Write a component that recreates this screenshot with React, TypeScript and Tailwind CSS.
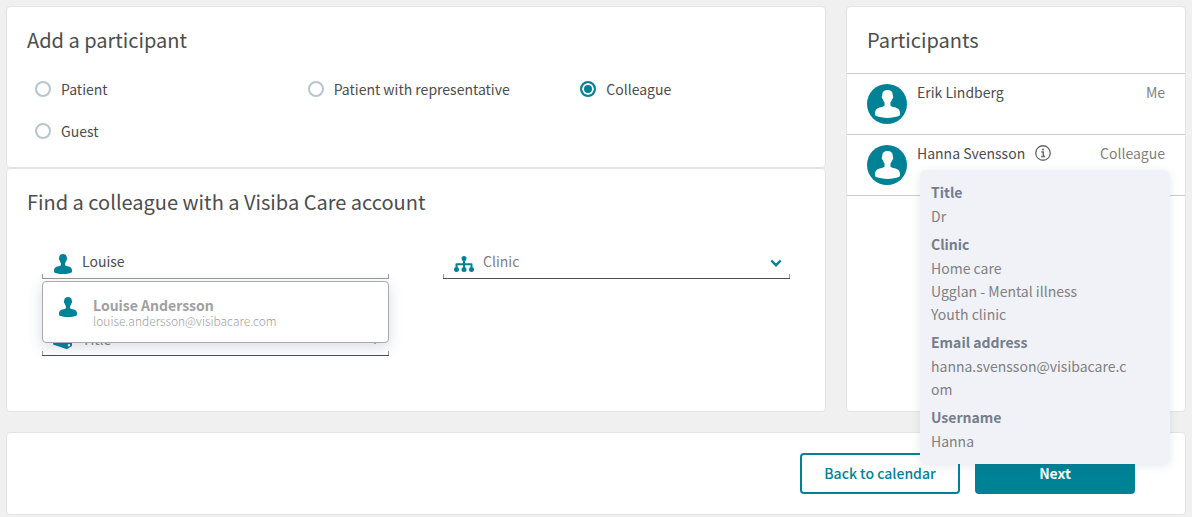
import { useState, type ReactNode } from 'react'

const participantTypes = ['Patient', 'Patient with representative', 'Colleague', 'Guest']

const details = [
  { label: 'Title', values: ['Dr'] },
  { label: 'Clinic', values: ['Home care', 'Ugglan - Mental illness', 'Youth clinic'] },
  { label: 'Email address', values: ['hanna.svensson@visibacare.com'] },
  { label: 'Username', values: ['Hanna'] },
]

function PersonIcon({ className }: { className: string }) {
  return (
    <svg viewBox="0 0 18 20" fill="currentColor" className={className} aria-hidden="true">
      <path d="M9 0C6.600 0 5.200 1.300 5.200 3.600c0 .5-.4.7-.3 1.500.1.8.4 1.100.8 1.300.2 1.200.6 1.900 1.200 2.500v1.900c0 .6-.5.9-1.300 1.100l-2.400.6C1.200 13 0 14.400 0 16.600v1c0 .6.3.9.9 1.100C3 19.500 5.900 20 9 20s6-.5 8.100-1.300c.6-.2.9-.5.9-1.100v-1c0-2.200-1.200-3.600-3.200-4.100l-2.400-.6c-.8-.2-1.300-.5-1.300-1.100V8.900c.6-.6 1-1.300 1.200-2.500.4-.2.7-.5.8-1.300.1-.8-.3-1-.3-1.500C12.800 1.300 11.400 0 9 0z" />
    </svg>
  )
}

function ClinicIcon({ className }: { className: string }) {
  return (
    <svg viewBox="0 0 20 16" className={className} aria-hidden="true">
      <path d="M10 3v10M2.500 13V8.200h15V13" fill="none" stroke="currentColor" strokeWidth="2" strokeLinejoin="round" />
      <g fill="currentColor">
        <circle cx="10" cy="2.500" r="2.500" />
        <circle cx="2.500" cy="13.500" r="2.500" />
        <circle cx="10" cy="13.500" r="2.500" />
        <circle cx="17.500" cy="13.500" r="2.500" />
      </g>
    </svg>
  )
}

function TagIcon({ className }: { className: string }) {
  return (
    <svg viewBox="0 0 20 20" fill="currentColor" className={className} aria-hidden="true">
      <path
        fillRule="evenodd"
        d="M1 5 11 1l8 6v8l-5 3.200L0 13.500zM16 13a1.200 1.200 0 1 0 0 2.400 1.200 1.200 0 0 0 0-2.400z"
      />
    </svg>
  )
}

function InfoIcon({ className }: { className: string }) {
  return (
    <svg viewBox="0 0 15 15" fill="none" stroke="currentColor" className={className} aria-hidden="true">
      <circle cx="7.500" cy="7.500" r="6.800" strokeWidth="1.200" />
      <path d="M6 6.500h1.800v4M5.800 10.800h3.700" strokeWidth="1.300" />
      <circle cx="7.500" cy="4.200" r="0.900" fill="currentColor" stroke="none" />
    </svg>
  )
}

function Chevron() {
  return (
    <svg
      viewBox="0 0 12 8"
      fill="none"
      stroke="currentColor"
      strokeWidth="2.400"
      className="pointer-events-none absolute right-2 top-3.5 h-2 w-3 text-[#008296]"
      aria-hidden="true"
    >
      <path d="M1.300 1.500 6 6.200l4.700-4.700" />
    </svg>
  )
}

function Field({ icon, line, children }: { icon: ReactNode; line: string; children: ReactNode }) {
  return (
    <div
      className={`relative flex h-[34px] items-center gap-[9px] border-b pl-[11px] after:pointer-events-none after:absolute after:inset-x-0 after:bottom-0 after:h-1 after:border-x after:border-[#999] ${line}`}
    >
      <span className="flex w-5 shrink-0 justify-center pt-1 text-[#008296]">{icon}</span>
      {children}
    </div>
  )
}

function Card({ className = '', children }: { className?: string; children: ReactNode }) {
  return <section className={`rounded border border-[#e4e4e4] bg-white ${className}`}>{children}</section>
}

function Avatar() {
  return (
    <div className="flex size-10 shrink-0 items-center justify-center rounded-full bg-[#008296]">
      <PersonIcon className="h-7 w-[25px] text-white" />
    </div>
  )
}

export default function App() {
  const [type, setType] = useState('Colleague')
  const [query, setQuery] = useState('Louise')

  return (
    <div className="min-h-screen bg-[#f0f0f0] p-1.5 pb-0.5 font-['Noto_Sans_CJK_SC',sans-serif] text-sm text-[#4d4d4d]">
      <div className="flex gap-5">
        <main className="flex min-w-0 flex-1 flex-col">
          <Card className="pb-[15px] pt-[21px]">
            <h2 className="px-5 text-xl leading-6">Add a participant</h2>
            <div className="mt-4 grid grid-cols-3" role="radiogroup" aria-label="Participant type">
              {participantTypes.map((name) => (
                <label key={name} className="flex h-[42px] cursor-pointer items-center gap-2.5 pl-7">
                  <input
                    type="radio"
                    name="participant-type"
                    checked={type === name}
                    onChange={() => setType(name)}
                    className="size-4 shrink-0 appearance-none rounded-full border-2 border-[#b9c4cc] checked:border-[#008296] checked:bg-[#008296] checked:shadow-[inset_0_0_0_2px_white]"
                  />
                  {name}
                </label>
              ))}
            </div>
          </Card>

          <Card className="flex-1 pb-[55px] pt-[21px]">
            <h2 className="px-5 text-xl leading-6">Find a colleague with a Visiba Care account</h2>
            <div className="mt-[31px] grid grid-cols-2 gap-x-[54px] gap-y-[43px] px-[35px]">
              <div className="relative">
                <Field icon={<PersonIcon className="h-5 w-[18px]" />} line="border-[#999]">
                  <input
                    type="text"
                    aria-label="Colleague name"
                    value={query}
                    onChange={(e) => setQuery(e.target.value)}
                    className="min-w-0 flex-1 bg-transparent pb-0.5 outline-none"
                  />
                </Field>
                {/* Search suggestions */}
                <button
                  type="button"
                  className="absolute inset-x-0 top-9 z-10 flex h-[62px] cursor-pointer items-start rounded border border-[#aaa] bg-white pl-4 pt-[15px] text-left shadow-[0_4px_14px_rgba(60,80,120,0.2)]"
                >
                  <PersonIcon className="h-5 w-[18px] text-[#008296]" />
                  <span className="ml-4 flex flex-col text-[#a0a0a0]">
                    <span className="font-bold leading-4">Louise Andersson</span>
                    <span className="text-xs font-light leading-4">louise.andersson@visibacare.com</span>
                  </span>
                </button>
              </div>

              <Field icon={<ClinicIcon className="h-4 w-5" />} line="border-[#4d4d4d]">
                <select aria-label="Clinic" className="min-w-0 flex-1 appearance-none bg-transparent pb-0.5 text-[#808080] outline-none">
                  <option>Clinic</option>
                </select>
                <Chevron />
              </Field>

              <Field icon={<TagIcon className="size-5" />} line="border-[#4d4d4d]">
                <select aria-label="Title" className="min-w-0 flex-1 appearance-none bg-transparent text-[#808080] outline-none">
                  <option>Title</option>
                </select>
                <Chevron />
              </Field>
            </div>
          </Card>
        </main>

        <aside className="flex w-[340px] shrink-0 flex-col">
          <Card className="flex-1 pt-[21px]">
            <h2 className="px-5 pb-[21px] text-xl leading-6">Participants</h2>
            <ul className="border-b border-[#ccc]">
              <li className="flex border-t border-[#ccc] px-5 py-2.5">
                <Avatar />
                <div className="ml-2.5 flex flex-1 justify-between leading-4">
                  <span>Erik Lindberg</span>
                  <span className="text-[#808080]">Me</span>
                </div>
              </li>
              <li className="relative flex border-t border-[#ccc] px-5 py-2.5">
                <Avatar />
                <div className="ml-2.5 flex flex-1 items-start justify-between leading-4">
                  <span className="flex items-center gap-2.5">
                    Hanna Svensson
                    <button type="button" aria-label="Show details" className="cursor-pointer text-[#666]">
                      <InfoIcon className="size-4" />
                    </button>
                  </span>
                  <span className="text-[#808080]">Colleague</span>
                </div>
                <dl className="absolute right-[15px] top-[35px] z-20 flex w-[250px] flex-col gap-[5px] rounded-md bg-[#f1f2f8] py-[11px] pl-[11px] pr-10 text-[#808080] shadow-[0_2px_10px_rgba(60,70,90,0.12)]">
                  {details.map((item) => (
                    <div key={item.label}>
                      <dt className="pb-0.5 font-bold leading-[22px] text-[#757d8a]">{item.label}</dt>
                      {item.values.map((value) => (
                        <dd key={value} className="break-all leading-[23px]">
                          {value}
                        </dd>
                      ))}
                    </div>
                  ))}
                </dl>
              </li>
            </ul>
          </Card>
        </aside>
      </div>

      <Card className="mt-5 flex justify-end gap-[15px] py-5 pr-[50px]">
        <button type="button" className="h-[41px] w-40 cursor-pointer rounded border-2 border-[#008296] bg-white pb-0.5 font-medium text-[#008296]">
          Back to calendar
        </button>
        <button type="button" className="h-[41px] w-40 cursor-pointer rounded bg-[#008296] pb-0.5 font-bold text-white">
          Next
        </button>
      </Card>
    </div>
  )
}
